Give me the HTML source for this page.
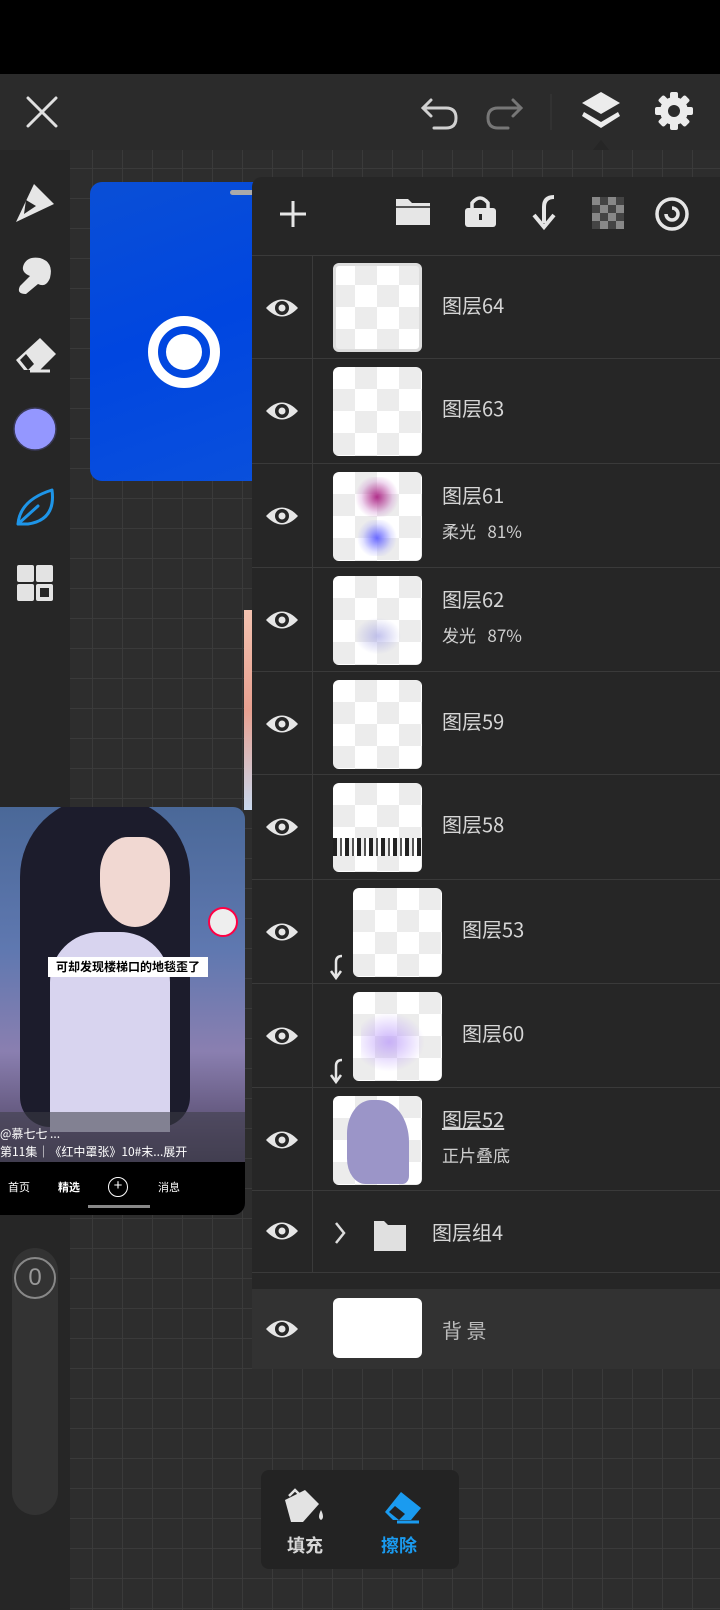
<!DOCTYPE html>
<html><head><meta charset="utf-8"><style>
*{margin:0;padding:0;box-sizing:border-box}
body{width:720px;height:1610px;background:#2c2c2c;position:relative;overflow:hidden;font-family:"Liberation Sans","Noto Sans CJK SC",sans-serif}
.abs{position:absolute}
#canvas{left:70px;top:150px;width:650px;height:1460px;background-color:#2d2d2d;background-image:linear-gradient(#3a3a3a 1px,transparent 1px),linear-gradient(90deg,#3a3a3a 1px,transparent 1px);background-size:30px 30px;background-position:22px 18px}
.row{position:absolute;left:0;width:468px;border-top:1px solid #3a3a3a}
.eye{position:absolute;left:12px;width:36px;height:26px}
.thumb{position:absolute;width:89px;height:89px;border-radius:6px;background-color:#fff;background-image:linear-gradient(45deg,#ececec 25%,transparent 25%,transparent 75%,#ececec 75%),linear-gradient(45deg,#ececec 25%,transparent 25%,transparent 75%,#ececec 75%);background-size:44px 44px;background-position:0 0,22px 22px}
.name{position:absolute;color:#d6d6d6;font-size:20px;font-family:"Noto Sans CJK SC","Liberation Sans",sans-serif}
.sub{position:absolute;color:#cfcfcf;font-size:17px;font-family:"Noto Sans CJK SC",sans-serif}
</style></head><body>
<div class="abs" style="left:0;top:0;width:720px;height:74px;background:#000"></div>
<div class="abs" style="left:0;top:74px;width:720px;height:76px;background:#2b2b2b"></div>
<div id="canvas" class="abs"></div>
<div class="abs" style="left:0;top:150px;width:70px;height:1460px;background:#262626"></div>

<svg class="abs" style="left:0;top:74px" width="720" height="76">
<g stroke="#e0e0e0" stroke-width="3" fill="none" stroke-linecap="round">
<path d="M28 24 L56 52 M56 24 L28 52"/>
<path d="M424 34 L446 34 Q456 34 456 44 Q456 54 446 54 L434 54" stroke="#d0d0d0"/>
<path d="M431 26 L423 34 L431 42" stroke="#d0d0d0"/>
<path d="M520 34 L498 34 Q488 34 488 44 Q488 54 498 54 L508 54" stroke="#777"/>
<path d="M513 26 L521 34 L513 42" stroke="#777"/>
</g>
<line x1="551" y1="20" x2="551" y2="56" stroke="#3a3a3a" stroke-width="1"/>
<path d="M601 18 L620 29 L601 40 L582 29 Z" fill="#ececec"/>
<path d="M584 38 L601 48 L618 38 L620 42 L601 54 L582 42 Z" fill="#ececec"/>
<g transform="translate(674,37)"><circle r="14" fill="#ececec"/>
<g fill="#ececec"><rect x="-4" y="-19" width="8" height="38" rx="2"/><rect x="-4" y="-19" width="8" height="38" rx="2" transform="rotate(45)"/><rect x="-4" y="-19" width="8" height="38" rx="2" transform="rotate(90)"/><rect x="-4" y="-19" width="8" height="38" rx="2" transform="rotate(135)"/></g>
<circle r="6" fill="#2b2b2b"/></g>
<path d="M593 76 L601 66 L609 76 Z" fill="#262626"/>
</svg>

<svg class="abs" style="left:0;top:160px" width="70" height="460">
<path d="M34 24 L54 44 L16 62 Z" fill="#e6e6e6"/><path d="M26 40 L36 46 L24 54 Z" fill="#262626"/>
<path d="M24 104 Q28 96 40 98 Q54 102 50 118 Q46 128 38 124 L26 134 Q16 134 20 126 L30 116 Q20 112 24 104Z" fill="#e6e6e6"/>
<path d="M40 178 L56 194 L40 210 L24 210 L16 200 Z" fill="#e6e6e6"/><path d="M20 200 L26 194 L34 204 L28 210 Z" fill="#262626"/><line x1="30" y1="211" x2="50" y2="211" stroke="#e6e6e6" stroke-width="3"/>
<circle cx="35" cy="269" r="21" fill="#9497ff" stroke="#3a3a5a" stroke-width="1.5"/>
<path d="M18 364 Q20 340 52 330 Q56 360 28 364 Z M18 364 L38 346" fill="none" stroke="#1e95e8" stroke-width="3" stroke-linecap="round" stroke-linejoin="round"/>
<rect x="17" y="405" width="17" height="17" rx="2" fill="#e3e3e3"/><rect x="36" y="405" width="17" height="17" rx="2" fill="#e3e3e3"/><rect x="17" y="424" width="17" height="17" rx="2" fill="#e3e3e3"/><rect x="36" y="424" width="17" height="17" rx="2" fill="#e3e3e3"/><rect x="40" y="428" width="9" height="9" fill="#262626"/>
</svg>

<div class="abs" style="left:90px;top:182px;width:180px;height:299px;background:linear-gradient(160deg,#0a4fd6,#0046e0 50%,#0a50dc);border-radius:12px"></div>
<div class="abs" style="left:230px;top:190px;width:30px;height:5px;background:#aaa;border-radius:3px"></div>
<div class="abs" style="left:148px;top:316px;width:72px;height:72px;border-radius:50%;border:10px solid #fff"></div>
<div class="abs" style="left:166px;top:334px;width:36px;height:36px;border-radius:50%;background:#fff"></div>
<div class="abs" style="left:244px;top:610px;width:8px;height:200px;background:linear-gradient(#f3c2b0,#e8a090,#c8d8ee)"></div>

<!-- phone screenshot -->
<div class="abs" style="left:0;top:807px;width:245px;height:408px;border-radius:0 12px 12px 0;overflow:hidden;background:linear-gradient(180deg,#4a6898 0%,#5f78b0 35%,#8a7fb0 60%,#5a4f72 80%,#2a2838 100%)">
<div class="abs" style="left:20px;top:-10px;width:170px;height:330px;background:#1c1c2c;border-radius:80px 80px 30px 30px"></div>
<div class="abs" style="left:100px;top:30px;width:70px;height:90px;background:#f1d8d2;border-radius:40% 40% 50% 50%"></div>
<div class="abs" style="left:50px;top:125px;width:120px;height:200px;background:#d8d4ef;border-radius:50px 50px 0 0"></div>
<div class="abs" style="left:48px;top:150px;width:160px;height:20px;background:#fff;color:#000;font-size:12px;font-weight:bold;text-align:center;font-family:'Noto Sans CJK SC',sans-serif;line-height:20px">可却发现楼梯口的地毯歪了</div>
<div class="abs" style="left:208px;top:100px;width:30px;height:30px;border-radius:50%;background:#eee;border:2px solid #f04"></div>
<div class="abs" style="left:0;top:305px;width:245px;height:50px;background:rgba(60,60,70,.55)"></div>
<div class="abs" style="left:0;top:318px;color:#fff;font-size:12px;font-family:'Noto Sans CJK SC',sans-serif;white-space:nowrap;line-height:18px">@慕七七 ...<br>第11集｜《红中罩张》10#末...展开</div>
<div class="abs" style="left:0;top:355px;width:245px;height:53px;background:#000"></div>
<div class="abs" style="left:8px;top:372px;color:#fff;font-size:11px;font-family:'Noto Sans CJK SC',sans-serif">首页</div>
<div class="abs" style="left:58px;top:372px;color:#fff;font-size:11px;font-weight:bold;font-family:'Noto Sans CJK SC',sans-serif">精选</div>
<div class="abs" style="left:108px;top:370px;width:20px;height:20px;border:1.5px solid #fff;border-radius:50%;color:#fff;font-size:15px;line-height:16px;text-align:center">+</div>
<div class="abs" style="left:158px;top:372px;color:#fff;font-size:11px;font-family:'Noto Sans CJK SC',sans-serif">消息</div>
<div class="abs" style="left:88px;top:398px;width:62px;height:3px;background:#888"></div>
</div>

<div class="abs" style="left:12px;top:1248px;width:46px;height:267px;background:#333;border-radius:23px"></div>
<div class="abs" style="left:14px;top:1257px;width:42px;height:42px;border-radius:50%;border:2px solid #888;color:#999;font-size:24px;text-align:center;line-height:38px">0</div>

<div class="abs" style="left:252px;top:177px;width:468px;height:1192px;background:#262626;border-radius:10px 0 0 10px">
<svg class="abs" style="left:0;top:0" width="468" height="78">
<path d="M41 24 V50 M28 37 H54" stroke="#e6e6e6" stroke-width="3"/>
<path d="M144 22 H156 L160 26 H178 V48 H144 Z" fill="#e6e6e6"/><line x1="144" y1="30" x2="178" y2="30" stroke="#262626" stroke-width="1.5"/>
<path d="M220 32 V26 Q228 16 236 26 V32" fill="none" stroke="#e6e6e6" stroke-width="3.5"/><rect x="213" y="31" width="31" height="19" rx="3" fill="#e6e6e6"/><rect x="227" y="37" width="3" height="6" fill="#262626"/>
<path d="M302 20 Q292 20 292 30 V46 M282 38 L292 50 L302 38" fill="none" stroke="#e6e6e6" stroke-width="4"/>
<g fill="#888"><rect x="340" y="20" width="32" height="32"/></g><g fill="#444"><rect x="348" y="20" width="8" height="8"/><rect x="364" y="20" width="8" height="8"/><rect x="340" y="28" width="8" height="8"/><rect x="356" y="28" width="8" height="8"/><rect x="348" y="36" width="8" height="8"/><rect x="364" y="36" width="8" height="8"/><rect x="340" y="44" width="8" height="8"/><rect x="356" y="44" width="8" height="8"/></g>
<circle cx="420" cy="37" r="15" fill="none" stroke="#e6e6e6" stroke-width="3.5"/><path d="M420 31 A6 6 0 1 1 414 37" fill="none" stroke="#e6e6e6" stroke-width="3.5"/>
</svg>
<div class="abs" style="left:60px;top:78px;width:1px;height:1018px;background:#3a3a3a"></div>
</div>

<div class="abs" style="left:252px;top:255px">
<svg width="0" height="0" style="position:absolute"><defs><g id="e"><path d="M2 13 Q18 -4 34 13 Q18 30 2 13Z" fill="#e6e6e6"/><circle cx="18" cy="13" r="7" fill="#262626"/><circle cx="18" cy="13" r="3.5" fill="#e6e6e6"/></g></defs></svg>

<div class="row" style="top:0;height:104px"><svg class="eye" style="top:39px"><use href="#e"/></svg><div class="thumb" style="left:81px;top:7px;box-shadow:inset 0 0 0 3px #ddd"></div><div class="name" style="left:190px;top:34px">图层64</div></div>
<div class="row" style="top:103px;height:104px"><svg class="eye" style="top:39px"><use href="#e"/></svg><div class="thumb" style="left:81px;top:8px"></div><div class="name" style="left:190px;top:34px">图层63</div></div>
<div class="row" style="top:208px;height:104px"><svg class="eye" style="top:39px"><use href="#e"/></svg><div class="thumb" style="left:81px;top:8px"><div class="abs" style="left:20px;top:5px;width:48px;height:40px;background:radial-gradient(circle,#b0308a,rgba(200,120,200,.3) 50%,transparent 70%)"></div><div class="abs" style="left:22px;top:48px;width:44px;height:36px;background:radial-gradient(circle,#6a6aff,rgba(160,160,255,.3) 50%,transparent 70%)"></div></div><div class="name" style="left:190px;top:16px">图层61</div><div class="sub" style="left:190px;top:54px">柔光 &nbsp; 81%</div></div>
<div class="row" style="top:312px;height:104px"><svg class="eye" style="top:39px"><use href="#e"/></svg><div class="thumb" style="left:81px;top:8px"><div class="abs" style="left:20px;top:40px;width:50px;height:40px;background:radial-gradient(ellipse,rgba(170,170,230,.7),transparent 65%)"></div></div><div class="name" style="left:190px;top:16px">图层62</div><div class="sub" style="left:190px;top:54px">发光 &nbsp; 87%</div></div>
<div class="row" style="top:416px;height:104px"><svg class="eye" style="top:39px"><use href="#e"/></svg><div class="thumb" style="left:81px;top:8px"></div><div class="name" style="left:190px;top:34px">图层59</div></div>
<div class="row" style="top:519px;height:104px"><svg class="eye" style="top:39px"><use href="#e"/></svg><div class="thumb" style="left:81px;top:8px"><div class="abs" style="left:0;top:55px;width:89px;height:18px;background:repeating-linear-gradient(90deg,#222 0 4px,#eee 4px 7px,#555 7px 9px,#fff 9px 12px)"></div></div><div class="name" style="left:190px;top:34px">图层58</div></div>
<div class="row" style="top:624px;height:104px"><svg class="eye" style="top:39px"><use href="#e"/></svg><div class="thumb" style="left:101px;top:8px"></div><div class="name" style="left:210px;top:34px">图层53</div><svg class="abs" style="left:76px;top:74px" width="20" height="28"><path d="M14 2 Q8 2 8 8 V22 M3 17 L8 24 L13 17" fill="none" stroke="#e6e6e6" stroke-width="2.5"/></svg></div>
<div class="row" style="top:728px;height:104px"><svg class="eye" style="top:39px"><use href="#e"/></svg><div class="thumb" style="left:101px;top:8px"><div class="abs" style="left:8px;top:15px;width:70px;height:70px;background:radial-gradient(ellipse at 40% 50%,rgba(190,160,250,.8),transparent 60%)"></div></div><div class="name" style="left:210px;top:34px">图层60</div><svg class="abs" style="left:76px;top:74px" width="20" height="28"><path d="M14 2 Q8 2 8 8 V22 M3 17 L8 24 L13 17" fill="none" stroke="#e6e6e6" stroke-width="2.5"/></svg></div>
<div class="row" style="top:832px;height:104px"><svg class="eye" style="top:39px"><use href="#e"/></svg><div class="thumb" style="left:81px;top:8px"><div class="abs" style="left:14px;top:4px;width:62px;height:84px;background:#9b95c8;border-radius:40% 50% 10% 30%"></div></div><div class="name" style="left:190px;top:16px;text-decoration:underline">图层52</div><div class="sub" style="left:190px;top:54px">正片叠底</div></div>
<div class="row" style="top:935px;height:82px"><svg class="eye" style="top:27px"><use href="#e"/></svg><svg class="abs" style="left:80px;top:28px" width="80" height="34"><path d="M4 4 L12 14 L4 24" fill="none" stroke="#ddd" stroke-width="2.5"/><path d="M42 2 H52 L56 6 H74 V32 H42 Z" fill="#e0e0e0"/></svg><div class="name" style="left:180px;top:26px">图层组4</div></div>
<div class="row" style="top:1017px;height:16px"></div>
<div class="abs" style="left:0;top:1034px;width:468px;height:80px;background:#323232"><svg class="eye" style="top:27px"><use href="#e"/></svg><div class="abs" style="left:81px;top:9px;width:89px;height:60px;background:#fff;border-radius:6px"></div><div class="name" style="left:190px;top:26px;color:#bbb">背 景</div></div>
</div>

<div class="abs" style="left:261px;top:1470px;width:198px;height:99px;background:#232323;border-radius:8px">
<svg class="abs" style="left:0;top:0" width="198" height="60">
<path d="M24 30 L44 20 L58 34 L42 52 L30 52 Z" fill="#e3e3e3"/><path d="M28 26 L34 20 L40 26" fill="none" stroke="#e3e3e3" stroke-width="2.5"/><path d="M60 40 Q56 48 60 50 Q64 48 60 40Z" fill="#e3e3e3"/>
<path d="M140 22 L160 38 L150 50 L132 50 L124 42 Z" fill="#1a9bf0"/><path d="M128 42 L134 36 L144 44 L138 50 Z" fill="#232323"/><line x1="136" y1="52" x2="158" y2="52" stroke="#1a9bf0" stroke-width="3"/>
</svg>
<div class="abs" style="left:26px;top:62px;color:#d8d8d8;font-size:18px;font-weight:bold;font-family:'Noto Sans CJK SC',sans-serif">填充</div>
<div class="abs" style="left:120px;top:62px;color:#1a9bf0;font-size:18px;font-weight:bold;font-family:'Noto Sans CJK SC',sans-serif">擦除</div>
</div>
</body></html>
